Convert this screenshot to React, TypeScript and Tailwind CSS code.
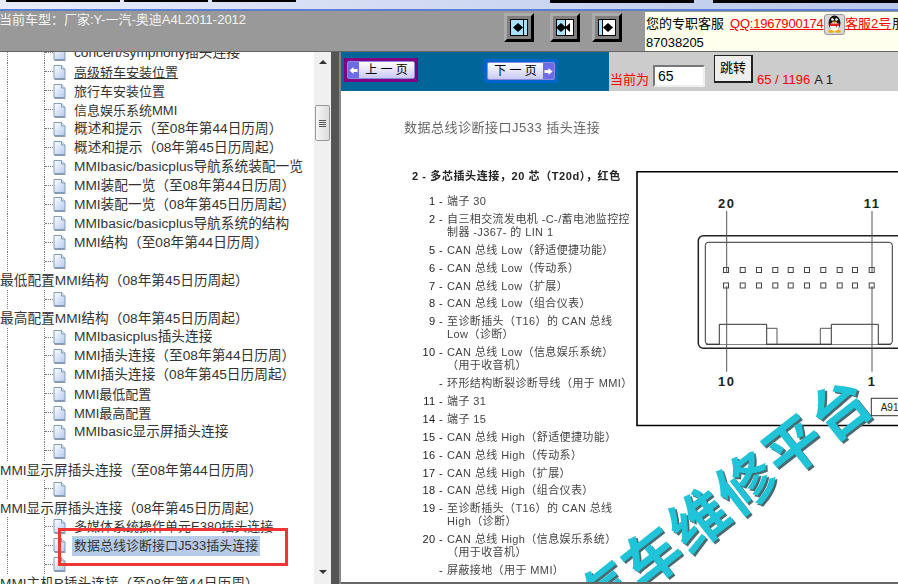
const treeRows = [
    { text: 'concert/symphony插头连接' },
    { text: '高级轿车安装位置', underline: true, tight: true },
    { text: '旅行车安装位置', tight: true },
    { text: '信息娱乐系统MMI', tight: true },
    { text: '概述和提示（至08年第44日历周）' },
    { text: '概述和提示（08年第45日历周起）' },
    { text: 'MMIbasic/basicplus导航系统装配一览' },
    { text: 'MMI装配一览（至08年第44日历周）' },
    { text: 'MMI装配一览（08年第45日历周起）' },
    { text: 'MMIbasic/basicplus导航系统的结构' },
    { text: 'MMI结构（至08年第44日历周）' },
    { text: '' },
    { text: '最低配置MMI结构（08年第45日历周起）', top: true },
    { text: '' },
    { text: '最高配置MMI结构（08年第45日历周起）', top: true },
    { text: 'MMIbasicplus插头连接' },
    { text: 'MMI插头连接（至08年第44日历周）' },
    { text: 'MMI插头连接（08年第45日历周起）' },
    { text: 'MMI最低配置', tight: true },
    { text: 'MMI最高配置', tight: true },
    { text: 'MMIbasic显示屏插头连接' },
    { text: '' },
    { text: 'MMI显示屏插头连接（至08年第44日历周）', top: true },
    { text: '' },
    { text: 'MMI显示屏插头连接（08年第45日历周起）', top: true },
    { text: '多媒体系统操作单元E380插头连接', tight: true },
    { text: '数据总线诊断接口J533插头连接', selected: true },
    { text: '' },
    { text: 'MMI主机R插头连接（至08年第44日历周）', top: true },
];

const pinRows = [
    { no: '1 -', text: '端子 30' },
    { no: '2 -', text: '自三相交流发电机 -C-/蓄电池监控控\n制器 -J367- 的 LIN 1' },
    { no: '5 -', text: 'CAN 总线 Low（舒适便捷功能）' },
    { no: '6 -', text: 'CAN 总线 Low（传动系）' },
    { no: '7 -', text: 'CAN 总线 Low（扩展）' },
    { no: '8 -', text: 'CAN 总线 Low（组合仪表）' },
    { no: '9 -', text: '至诊断插头（T16）的 CAN 总线\nLow（诊断）' },
    { no: '10 -', text: 'CAN 总线 Low（信息娱乐系统）\n（用于收音机）' },
    { no: '-', text: '环形结构断裂诊断导线（用于 MMI）' },
    { no: '11 -', text: '端子 31' },
    { no: '14 -', text: '端子 15' },
    { no: '15 -', text: 'CAN 总线 High（舒适便捷功能）' },
    { no: '16 -', text: 'CAN 总线 High（传动系）' },
    { no: '17 -', text: 'CAN 总线 High（扩展）' },
    { no: '18 -', text: 'CAN 总线 High（组合仪表）' },
    { no: '19 -', text: '至诊断插头（T16）的 CAN 总线\nHigh（诊断）' },
    { no: '20 -', text: 'CAN 总线 High（信息娱乐系统）\n（用于收音机）' },
    { no: '-', text: '屏蔽接地（用于 MMI）' },
];

const pinXs = [90, 106.7, 123, 139.3, 154.7, 171, 187.3, 203.7, 219, 235.7];

const PageIcon = () => (
    <svg width="13" height="15" viewBox="0 0 13 15" className="shrink-0">
        <defs>
            <linearGradient id="pg" x1="0" y1="0" x2="1" y2="1">
                <stop offset="0" stopColor="#ffffff" />
                <stop offset="1" stopColor="#b5c9ee" />
            </linearGradient>
        </defs>
        <path d="M1 0.5H8.5L12 4V13.5H1Z" fill="url(#pg)" stroke="#7f9db9" />
        <path d="M8.5 0.5V4H12" fill="#dce6f7" stroke="#7f9db9" />
        <path d="M1.5 14.5H12.5" stroke="#8d99ad" />
    </svg>
);

const TreeRow = ({ row }: { row: (typeof treeRows)[number] }) => {
    if (row.top) {
        return <div className="h-[18.95px] leading-[20px] whitespace-nowrap text-[#333]">{row.text}</div>;
    }
    return (
        <div className="flex items-center h-[18.95px] pl-[7px] whitespace-nowrap text-[#333]">
            <span className="w-[37px] self-stretch border-l border-dotted border-[#777]" />
            <span className="w-[9px] self-stretch flex flex-col border-l border-dotted border-[#777]">
                <span className="h-1/2 border-b border-dotted border-[#777]" />
            </span>
            <PageIcon />
            {row.selected ? (
                <span className="ml-[6px] pl-[2px] pr-[2px] text-[13px] bg-[#b8cce8] leading-5">{row.text}</span>
            ) : (
                <span className={`ml-[8px] ${row.tight ? 'text-[13px]' : ''} ${row.underline ? 'underline' : ''}`}>{row.text}</span>
            )}
        </div>
    );
};

const ToolButton = ({ children }: { children: React.ReactNode }) => (
    <div className="w-[30px] h-[29px] p-[3px] bg-[#808080] border-[3px] border-t-[#ababab] border-l-[#ababab] border-r-black border-b-black">
        {children}
    </div>
);

const Arrow = ({ x, dir }: { x: number; dir: 'l' | 'r' }) => (
    <path
        d={dir === 'r' ? `M${x} 4V13L${x + 5} 8.5Z` : `M${x} 4V13L${x - 5} 8.5Z`}
        fill="#000"
    />
);

const PageButton = ({ label, next }: { label: string; next?: boolean }) => (
    <div className="flex w-[68px] h-[18px] rounded-[2px] border border-[#8a8ae0] overflow-hidden bg-gradient-to-b from-[#ffffff] via-[#e4e4fb] to-[#c9c9f2]">
        {!next && (
            <span className="w-[11px] bg-[#6c6ce8] flex items-center justify-center">
                <svg width="9" height="9" viewBox="0 0 9 9">
                    <path d="M0.5 4.5L4.5 1V3H8.5V6H4.5V8Z" fill="#fff" />
                </svg>
            </span>
        )}
        <span className="flex-1 text-center text-[12px] leading-[16px] text-black whitespace-pre">{label}</span>
        {next && (
            <span className="w-[11px] bg-[#6c6ce8] flex items-center justify-center">
                <svg width="9" height="9" viewBox="0 0 9 9">
                    <path d="M8.5 4.5L4.5 1V3H0.5V6H4.5V8Z" fill="#fff" />
                </svg>
            </span>
        )}
    </div>
);

const Penguin = () => (
    <span className="inline-flex shrink-0 w-[21px] h-[21px] rounded-[3px] bg-[#d8d8d8] border border-[#999] items-center justify-center align-top">
        <svg width="17" height="18" viewBox="0 0 17 18">
            <ellipse cx="8.5" cy="8" rx="6" ry="7.5" fill="#111" />
            <ellipse cx="8.5" cy="11.5" rx="4.5" ry="4.5" fill="#fff" />
            <circle cx="6.5" cy="4.5" r="1.3" fill="#fff" />
            <circle cx="10.5" cy="4.5" r="1.3" fill="#fff" />
            <path d="M6 6.5H11L8.5 8Z" fill="#f5b400" />
            <path d="M3.5 8.5H13.5V10.5L11 11V13L9.5 11H3.5Z" fill="#e02020" />
            <ellipse cx="5" cy="16.5" rx="3" ry="1.3" fill="#f5a800" />
            <ellipse cx="12" cy="16.5" rx="3" ry="1.3" fill="#f5a800" />
        </svg>
    </span>
);

const App = () => {
    return (
        <div className="w-[898px] h-[584px] flex flex-col overflow-hidden bg-white font-['Liberation_Sans','Noto_Sans_CJK_SC',sans-serif]">
            {/* window strip */}
            <div className="flex h-[9px] shrink-0 bg-gradient-to-r from-[#e8ecfa] to-[#b9c7ea]">
                <div className="w-[114px] h-[2px] ml-[6px] bg-black" />
                <div className="w-[84px] h-[2px] ml-[4px] bg-black" />
                <div className="w-[84px] h-[2px] ml-[4px] bg-black" />
                <div className="w-[144px] h-[3px] ml-[254px] bg-black" />
                <div className="flex-1 h-[3px] ml-[19px] bg-black" />
            </div>
            <div className="h-[2px] shrink-0 bg-[#5b7fd0]" />

            {/* top bar */}
            <div className="flex h-[41px] shrink-0 bg-[#999999] border-b border-[#666]">
                <div className="w-[505px] -ml-px pt-[1px] text-[13px] leading-[16px] text-[#f4f4f4] whitespace-nowrap">
                    当前车型：厂家:Y-一汽-奥迪A4L2011-2012
                </div>
                <div className="flex w-[141px] gap-[16px] pt-[2px]">
                    <ToolButton>
                        <svg width="18" height="17" viewBox="0 0 18 17" className="block">
                            <rect x="0.5" y="0.5" width="17" height="16" fill="#a8e2ff" stroke="#000" />
                            <path d="M13.5 1V16" stroke="#000" />
                            <Arrow x={8} dir="r" />
                            <Arrow x={8} dir="l" />
                        </svg>
                    </ToolButton>
                    <ToolButton>
                        <svg width="18" height="17" viewBox="0 0 18 17" className="block">
                            <rect x="0.5" y="0.5" width="17" height="16" fill="#fff" stroke="#000" />
                            <rect x="1" y="1" width="8" height="15" fill="#a8e2ff" />
                            <path d="M9.5 1V16" stroke="#000" />
                            <Arrow x={5} dir="r" />
                            <Arrow x={5} dir="l" />
                            <Arrow x={14} dir="l" />
                        </svg>
                    </ToolButton>
                    <div className="-ml-[4px]">
                        <ToolButton>
                            <svg width="18" height="17" viewBox="0 0 18 17" className="block">
                                <rect x="0.5" y="0.5" width="17" height="16" fill="#fff" stroke="#000" />
                                <rect x="1" y="1" width="3" height="15" fill="#a8e2ff" />
                                <path d="M4.5 1V16" stroke="#000" />
                                <Arrow x={10} dir="r" />
                                <Arrow x={10} dir="l" />
                            </svg>
                        </ToolButton>
                    </div>
                </div>
                <div className="w-[253px] mt-px bg-[#ffffee] text-[13px] text-black whitespace-nowrap overflow-hidden">
                    <div className="flex h-[23px] pl-px pt-px items-center">
                        <span className="w-[84px] shrink-0">您的专职客服</span>
                        <span className="w-[94px] shrink-0 text-[#ff0000] underline tracking-[-0.2px]">QQ:1967900174</span>
                        <Penguin />
                        <span className="w-[47px] shrink-0 text-[#ff0000] underline">客服2号</span>
                        <span className="shrink-0">朋友</span>
                    </div>
                    <div className="pl-px leading-[16px]">87038205</div>
                </div>
            </div>

            {/* main area */}
            <div className="flex flex-1 min-h-0">
                {/* tree */}
                <div className="relative w-[314px] shrink-0 overflow-hidden text-[13.7px]">
                    <div className="-mt-[8px]">
                        {treeRows.map((row, i) => (
                            <TreeRow key={i} row={row} />
                        ))}
                    </div>
                    <div className="absolute left-[58px] top-[476px] w-[230px] h-[38px] border-[3px] border-[#f03535]" />
                </div>

                {/* scrollbar */}
                <div className="flex flex-col items-center w-[17px] shrink-0 bg-[#f0f0f0]">
                    <span className="mt-[8px] w-0 h-0 border-x-[4px] border-x-transparent border-b-[4px] border-b-[#333]" />
                    <div className="flex flex-col items-center justify-center gap-px w-[15px] h-[36px] mt-[41px] rounded-[2px] border border-[#999] bg-gradient-to-r from-[#f6f6f6] to-[#dcdcdc]">
                        <span className="w-[7px] h-px bg-[#555]" />
                        <span className="w-[7px] h-px bg-[#555]" />
                        <span className="w-[7px] h-px bg-[#555]" />
                        <span className="w-[7px] h-px bg-[#555]" />
                    </div>
                    <span className="mt-auto mb-[10px] w-0 h-0 border-x-[4px] border-x-transparent border-t-[4px] border-t-[#333]" />
                </div>

                {/* divider */}
                <div className="w-[10px] shrink-0 bg-[#555] border-r-2 border-[#888]" />

                {/* document side */}
                <div className="flex flex-col flex-1 min-w-0">
                    <div className="flex h-[39px] shrink-0">
                        <div className="flex w-[268px] bg-[#006699]">
                            <div className="mt-[6px] ml-[3px] h-[24px] p-[2px] border border-[#800080] bg-[#800080]">
                                <PageButton label="上 一 页" />
                            </div>
                            <div className="mt-[7px] ml-[66px] h-[24px] p-[3px] bg-[#0066cc]">
                                <PageButton label="下 一 页" next />
                            </div>
                        </div>
                        <div className="flex flex-1 pl-px bg-[#cccccc] text-[13px] whitespace-nowrap">
                            <span className="mt-[18px] text-[#ff0000]">当前为</span>
                            <div className="mt-[13px] ml-[4px] w-[52px] h-[22px] pl-[3px] leading-[18px] bg-white border-2 border-t-[#777] border-l-[#777] border-r-[#eee] border-b-[#eee] text-[14px] text-black">
                                65
                            </div>
                            <div className="mt-[3px] ml-[9px] w-[39px] h-[28px] text-center leading-[23px] bg-[#eeeeee] border border-r-2 border-b-2 border-[#222] text-black">
                                跳转
                            </div>
                            <span className="mt-[18px] ml-[4px] text-[#ff0000]">65 / 1196</span>
                            <span className="mt-[18px] ml-[4px] text-[#222]">A 1</span>
                        </div>
                    </div>

                    <div className="relative flex flex-1 min-h-0 pl-[63px] overflow-hidden bg-white border-b-2 border-[#666]">
                        <div className="w-[232px] shrink-0 pt-[29px] text-[11px] leading-[13px] tracking-[0.4px] text-[#444] blur-[0.3px] whitespace-nowrap">
                            <div className="text-[13px] leading-[16px] tracking-[0.5px] text-[#666]">
                                数据总线诊断接口J533 插头连接
                            </div>
                            <div className="mt-[34px] ml-[8px] font-bold tracking-[0.6px] text-[#222]">
                                2 - 多芯插头连接，20 芯（T20d），红色
                            </div>
                            <div className="flex flex-col gap-[4.9px] mt-[12px]">
                                {pinRows.map((row, i) => (
                                    <div key={i} className="flex">
                                        <span className="w-[39px] shrink-0 text-right text-[#222]">{row.no}</span>
                                        <span className="ml-[4px] whitespace-pre-line">{row.text}</span>
                                    </div>
                                ))}
                            </div>
                        </div>

                        {/* connector drawing */}
                        <svg width="262" height="256" viewBox="0 0 262 256" className="shrink-0 mt-[80px]">
                            <path d="M262 0.7H1V254.5H262" fill="none" stroke="#000" strokeWidth="1.6" />
                            <rect x="62.3" y="64.7" width="215" height="112.6" rx="5" fill="none" stroke="#222" strokeWidth="1.5" />
                            <rect x="69.3" y="71.3" width="187" height="102" rx="3" fill="none" stroke="#333" strokeWidth="1" />
                            <path d="M70 173.3H83.3V153.3H130.7V173.3H195.3V153.3H242.3V173.3H255" fill="#fff" stroke="#333" />
                            <path d="M130.7 157.3H141V173.3M184.3 173.3V157.3H195.3" fill="none" stroke="#555" />
                            {pinXs.map((x) => (
                                <g key={x}>
                                    <rect x={x - 2.5} y={96.5} width="5" height="5" fill="#fff" stroke="#444" />
                                    <rect x={x - 2.5} y={112} width="5" height="5" fill="#fff" stroke="#444" />
                                </g>
                            ))}
                            <path d="M90.7 40V101M236 40V101M90.7 115V200.7M236 115V200.7" stroke="#555" />
                            <g fontSize="13" fontWeight="700" letterSpacing="1.5" fill="#222" textAnchor="middle">
                                <text x="90.7" y="36.5">20</text>
                                <text x="236" y="36.5">11</text>
                                <text x="90.7" y="215">10</text>
                                <text x="236" y="215">1</text>
                            </g>
                            <rect x="235.3" y="227.3" width="40" height="17.4" fill="#fff" stroke="#333" />
                            <text x="244.7" y="239.5" fontSize="10" fill="#222">A91</text>
                        </svg>

                        {/* watermark */}
                        <div className="absolute left-[383px] top-[411px] -translate-x-1/2 -translate-y-1/2 rotate-[-38deg] text-[58px] leading-none font-bold tracking-[2px] text-[#20c4d8] whitespace-nowrap [text-shadow:0.4px_2.8px_0_#4a6a70]">
                            汽车维修平台
                        </div>
                    </div>
                </div>
            </div>
        </div>
    );
};

export default App;
